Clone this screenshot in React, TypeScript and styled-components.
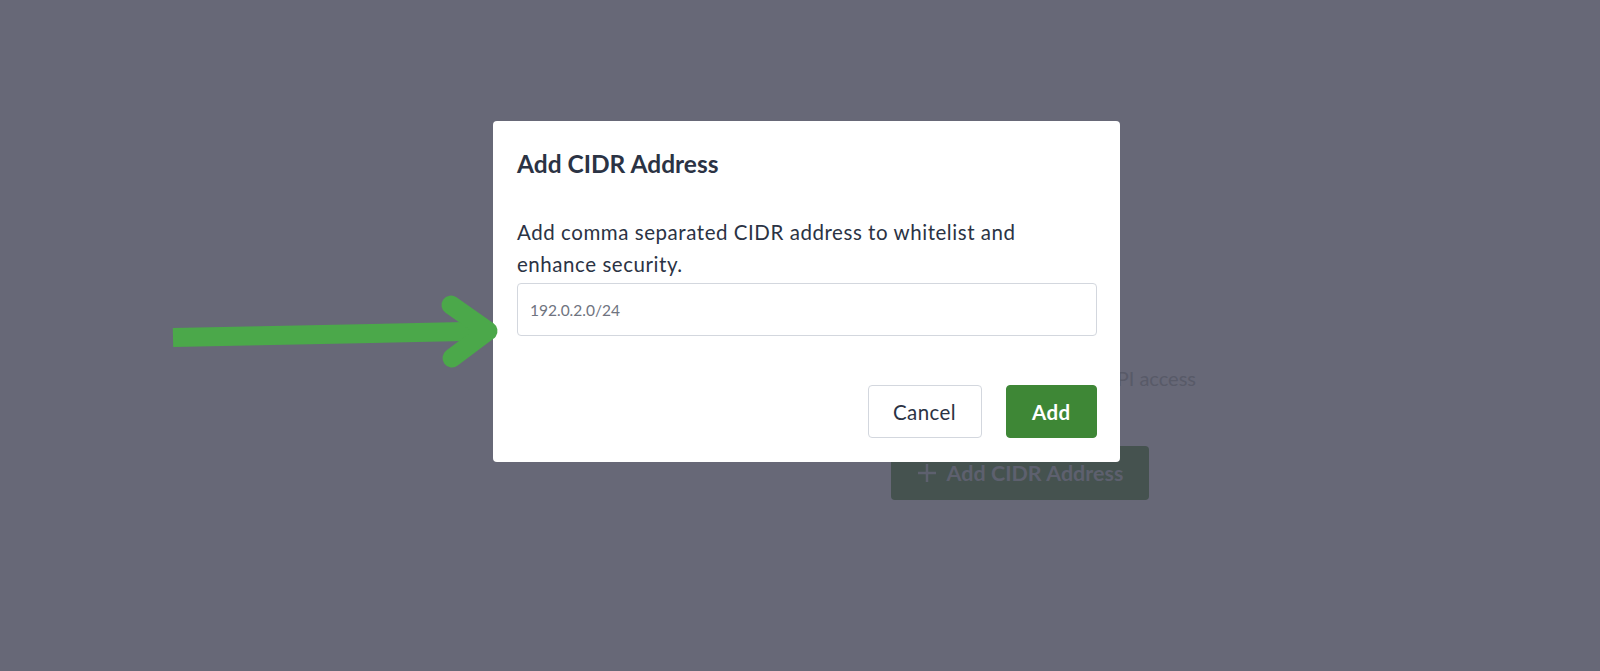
import React from "react";
import styled, { createGlobalStyle } from "styled-components";

const Global = createGlobalStyle`
  html, body { margin: 0; padding: 0; }
  body {
    background: #676877;
    font-family: Lato, "Open Sans", "Liberation Sans", sans-serif;
    width: 1600px;
    height: 671px;
    overflow: hidden;
  }
`;

const Page = styled.div`
  width: 1600px;
  height: 671px;
  box-sizing: border-box;
  background: #676877;
  display: flex;
  justify-content: flex-start;
  padding: 364px 0 0 891px;
`;

const Content = styled.div`
  width: 305px;
  display: flex;
  flex-direction: column;
  gap: 54px;
`;

const HintLine = styled.div`
  display: flex;
  justify-content: flex-end;
  white-space: nowrap;
  font-size: 20px;
  line-height: 28px;
  color: #585a68;
`;

const GhostButton = styled.div`
  align-self: flex-start;
  width: 258px;
  height: 54px;
  box-sizing: border-box;
  border-radius: 4px;
  background: #45524f;
  color: #5d606e;
  display: flex;
  align-items: center;
  justify-content: center;
  gap: 10px;
  font-size: 21.5px;
  font-weight: 700;
`;

const Modal = styled.div`
  position: fixed;
  left: 493px;
  top: 121px;
  width: 627px;
  height: 341px;
  box-sizing: border-box;
  background: #ffffff;
  border-radius: 4px;
  padding: 28px 23px 24px 24px;
  display: flex;
  flex-direction: column;
`;

const Title = styled.h2`
  margin: 0;
  font-size: 24.5px;
  line-height: 29px;
  font-weight: 700;
  color: #2b3344;
`;

const Description = styled.p`
  margin: 38px 0 0;
  font-size: 20.5px;
  letter-spacing: 0.55px;
  line-height: 32px;
  color: #2b3344;
  max-width: 560px;
`;

const Input = styled.input`
  margin-top: 3px;
  width: 100%;
  height: 53px;
  box-sizing: border-box;
  border: 1px solid #d3d7de;
  border-radius: 4px;
  padding: 0 12px;
  font-family: inherit;
  font-size: 15.5px;
  color: #6f7480;
  outline: none;
  &::placeholder { color: #6f7480; }
`;

const Footer = styled.div`
  margin-top: auto;
  display: flex;
  justify-content: flex-end;
  gap: 24px;
`;

const Button = styled.button<{ $primary?: boolean }>`
  height: 53px;
  box-sizing: border-box;
  border-radius: 4px;
  font-family: inherit;
  font-size: 20.5px;
  letter-spacing: 0.4px;
  padding: 0 ${(p) => (p.$primary ? "25.5px" : "24.5px")};
  cursor: pointer;
  border: 1px solid ${(p) => (p.$primary ? "#3e8736" : "#d3d7de")};
  background: ${(p) => (p.$primary ? "#3e8736" : "#ffffff")};
  color: ${(p) => (p.$primary ? "#ffffff" : "#2b3344")};
  font-weight: ${(p) => (p.$primary ? 700 : 400)};
`;

const Arrow = styled.svg`
  position: fixed;
  left: 0;
  top: 0;
  pointer-events: none;
`;

export default function App() {
  return (
    <>
      <Global />
      <Page>
        <Content>
          <HintLine>Restrict your API access</HintLine>
          <GhostButton>
            <svg width="20" height="20" viewBox="0 0 20 20">
              <path d="M10 1v18M1 10h18" stroke="#5d606e" strokeWidth="2.5" />
            </svg>
            Add CIDR Address
          </GhostButton>
        </Content>
      </Page>
      <Modal>
        <Title>Add CIDR Address</Title>
        <Description>
          Add comma separated CIDR address to whitelist and enhance security.
        </Description>
        <Input defaultValue="192.0.2.0/24" />
        <Footer>
          <Button>Cancel</Button>
          <Button $primary>Add</Button>
        </Footer>
      </Modal>
      <Arrow width="1600" height="671" viewBox="0 0 1600 671">
        <path
          d="M173 337.5 L488 331"
          stroke="#4ba84a"
          strokeWidth="19"
          fill="none"
        />
        <path
          d="M451 305 L488 331 L452 358"
          stroke="#4ba84a"
          strokeWidth="19"
          strokeLinecap="round"
          strokeLinejoin="round"
          fill="none"
        />
      </Arrow>
    </>
  );
}
